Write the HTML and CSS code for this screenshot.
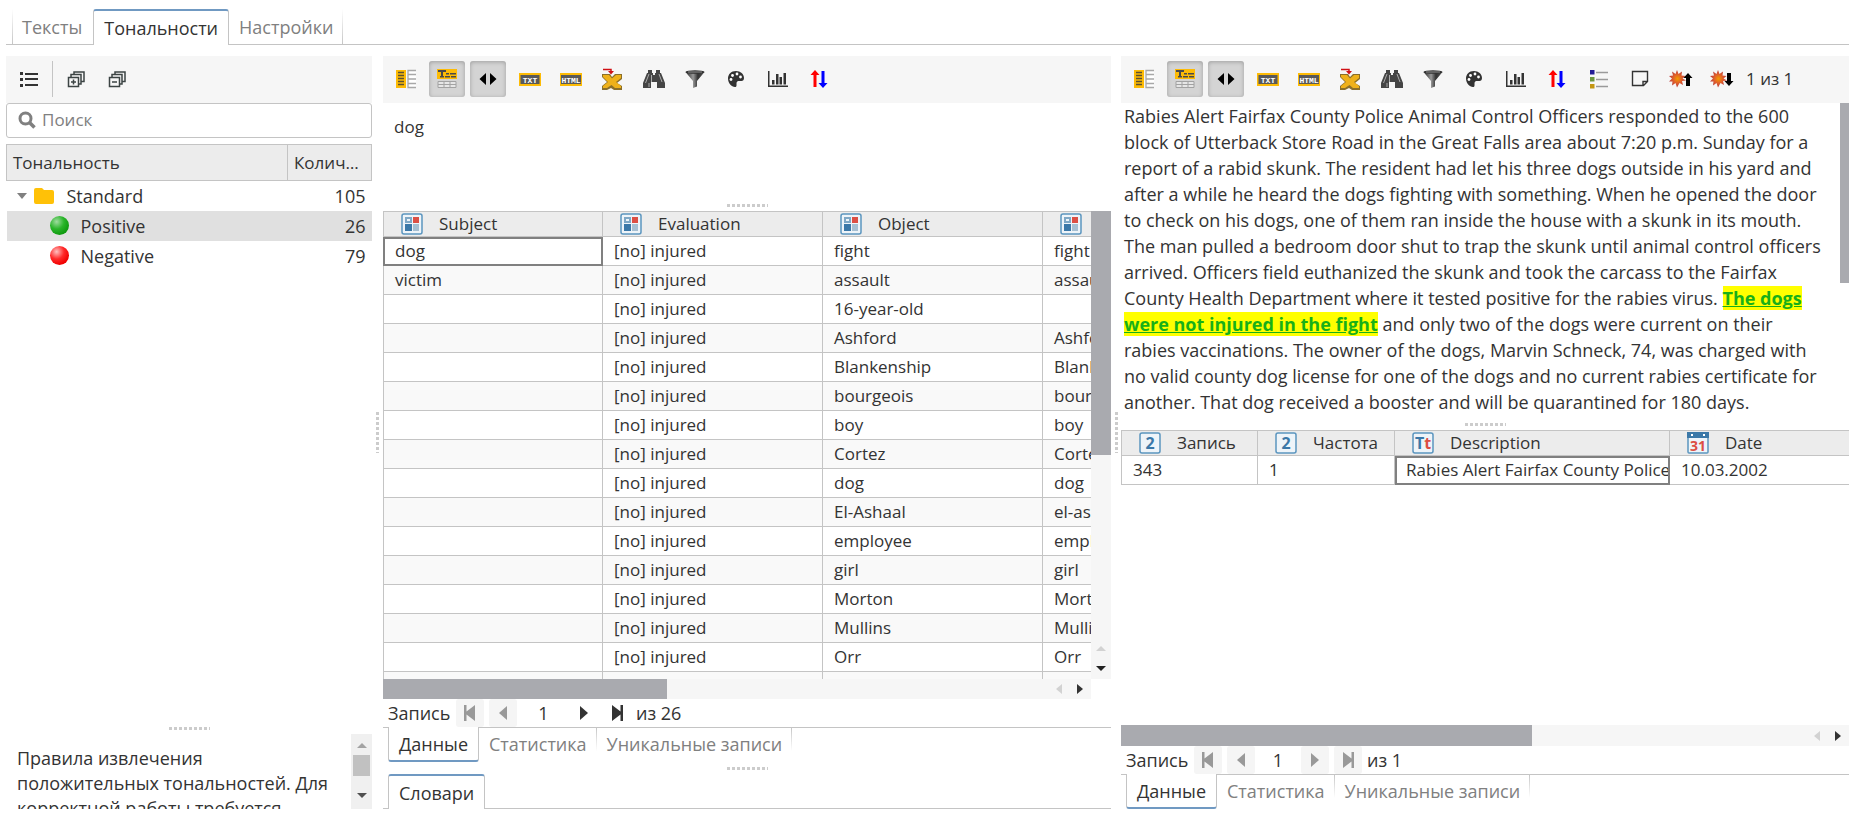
FILE: index.html
```html
<!DOCTYPE html>
<html lang="ru">
<head>
<meta charset="utf-8">
<title>Тональности</title>
<link rel="stylesheet" href="styles.css">
</head>
<body>
<svg class="gradients" aria-hidden="true">
  <defs>
    <radialGradient id="g-green" cx="35%" cy="30%" r="70%"><stop offset="0" stop-color="#9fdc9f"/><stop offset=".55" stop-color="#2bb52b"/><stop offset="1" stop-color="#0f9a0f"/></radialGradient>
    <radialGradient id="g-red" cx="35%" cy="30%" r="70%"><stop offset="0" stop-color="#ffc0c0"/><stop offset=".55" stop-color="#ff2a2a"/><stop offset="1" stop-color="#f00000"/></radialGradient>
    <linearGradient id="g-funnel"><stop offset="0" stop-color="#222"/><stop offset=".4" stop-color="#999"/><stop offset=".65" stop-color="#333"/><stop offset="1" stop-color="#555"/></linearGradient>
    <radialGradient id="g-star"><stop offset="0" stop-color="#f29a00"/><stop offset=".5" stop-color="#e0602a"/><stop offset="1" stop-color="#b83a3a"/></radialGradient>
  </defs>
</svg>
<svg class="sprite" aria-hidden="true">
  <symbol id="i-list" viewBox="0 0 20 20"><path fill="#333" d="M1 3h3v3H1zM1 9h3v3H1zM1 15h3v3H1zM6 4h13v2H6zM6 9h13v2H6zM6 15h13v2H6z"/></symbol>
  <symbol id="i-plus" viewBox="0 0 20 20"><path fill="none" stroke="#3c4444" stroke-width="1.500" d="M2.500 8.500h10v9h-10zM5 8V5.500h10V15h-2M8 5V3h10v9.500h-3M5 13h5M7.500 10.500v5"/></symbol>
  <symbol id="i-minus" viewBox="0 0 20 20"><path fill="none" stroke="#3c4444" stroke-width="1.500" d="M2.500 8.500h10v9h-10zM5 8V5.500h10V15h-2M8 5V3h10v9.500h-3M5 13h5"/></symbol>
  <symbol id="i-search" viewBox="0 0 18 18"><circle cx="7.500" cy="7.500" r="5.500" fill="none" stroke="#808080" stroke-width="3"/><path stroke="#808080" stroke-width="3.500" d="M11.500 11.500l5 5"/></symbol>
  <symbol id="i-cols" viewBox="0 0 20 20"><path fill="#fdbb05" d="M0 1h10v18H0z"/><path stroke="#5c5130" stroke-width="1.300" d="M2 3.500h6M2 6.500h6M2 9.500h6M2 12.500h6M2 15.500h6"/><path fill="#fff" stroke="#a8a8a8" stroke-width="1.300" d="M20 1.500h-8v17h8M12 5.500h8M12 10h8M12 14.500h8"/></symbol>
  <symbol id="i-rows" viewBox="0 0 20 20"><path fill="#fdbb05" d="M0 0h20v10H0z"/><path fill="#4a4a4a" d="M1 1h8v2H6v4H4V3H1zM9 4h3v1.500H9zM13 4h6v1.500h-6zM3 7h4v1.500H3zM8 7h5v1.500H8zM14 7h5v1.500h-5z"/><path fill="#e6e6e6" stroke="#a2a2a2" d="M1 12.500h18v6H1zM1 15.500h18M7 12.500v6M13 12.500v6"/></symbol>
  <symbol id="i-split" viewBox="0 0 20 20"><path d="M8 4v12L1.500 10zM12 4v12l6.500-6z"/></symbol>
  <symbol id="i-txt" viewBox="0 0 22 20"><path fill="#fdbb05" d="M0 4h22v13H0z"/><path fill="#595959" d="M1.500 6h19v9h-19z"/><text x="11" y="13.500" text-anchor="middle" class="px-label" fill="#fff">TXT</text></symbol>
  <symbol id="i-html" viewBox="0 0 22 20"><path fill="#fdbb05" d="M0 4h22v13H0z"/><path fill="#595959" d="M1 6h20v9H1z"/><text x="11" y="13.500" text-anchor="middle" class="px-label" fill="#fff">HTML</text></symbol>
  <symbol id="i-excel" viewBox="0 0 22 22"><path fill="#8a6f2a" d="M1 6h8l2 3 3-3h7v5l-5 4 5 3v4h-8l-3-2-4 2H1v-4l5-4-5-5z"/><path fill="#eeb11a" d="M2 7h6l3 3.500L15 7h5v3l-5 4 5 4v2h-6l-3.500-3L6 20H2v-2l5-4-5-5z"/><path fill="none" stroke="#d01015" stroke-width="1.500" d="M2 1.500h8V4"/><path fill="#d01015" d="M7 3h6l-3 3.500z"/></symbol>
  <symbol id="i-binoc" viewBox="0 0 22 20"><path fill="#454545" d="M5 1h4v3H5zM13 1h4v3h-4zM4 4h6v2h2V4h6l4 10v5h-8v-6h-6v6H0v-5z"/><path stroke="#aaa" stroke-width="1" d="M6 5L2.500 14M8.500 6v7M6 14v4M16 5l3 8"/></symbol>
  <symbol id="i-funnel" viewBox="0 0 20 20"><path fill="url(#g-funnel)" d="M.5 3L8 12v7l4-1.500V12l7.500-9z"/><ellipse cx="10" cy="3" rx="9.500" ry="1.800" fill="#333"/><path stroke="#aaa" d="M3 3h14" stroke-width=".8"/></symbol>
  <symbol id="i-palette" viewBox="0 0 18 18"><path fill="#333" d="M9 1c-5 0-8 3.500-8 7.500C1 13 4.500 17 8 17c2 0 1.500-2 1.500-3.500 0-2 1-2.500 3-2.500h2c1.500 0 2.500-1.200 2.500-3C17 4 13.500 1 9 1z"/><g fill="#fff"><circle cx="4" cy="9.500" r="1.400"/><circle cx="5.500" cy="5.500" r="1.400"/><circle cx="10" cy="4" r="1.400"/><circle cx="13.500" cy="7" r="1.400"/></g></symbol>
  <symbol id="i-chart" viewBox="0 0 22 20"><path fill="#333" d="M1 2h1.500v14.500H21V18H1zM5 11h2.500v4.500H5zM9 5h2.500v10.500H9zM12.500 8H15v7.500h-2.500zM16.500 4H19v11.500h-2.500z"/></symbol>
  <symbol id="i-updown" viewBox="0 0 18 20"><path fill="red" d="M5 1l4.500 5H6.500v12h-3V6H.5z"/><path fill="#00f" d="M13 19l-4.500-5h3V2h3v12h3z"/></symbol>
  <symbol id="i-legend" viewBox="0 0 20 20"><path stroke="#9a9a9a" stroke-width="1.500" d="M7 3.500h12M7 10.500h12M7 17.500h12"/><path fill="#221b96" d="M1 1h4.500v4.500H1z"/><path fill="#6b9640" d="M1 8h4.500v4.500H1z"/><path fill="#c39612" d="M1 15h4.500v4.500H1z"/></symbol>
  <symbol id="i-note" viewBox="0 0 20 20"><path fill="none" stroke="#333" stroke-width="1.400" d="M2.500 2.500h15v10l-4 4h-11zM17 12.500h-4V16.500"/></symbol>
  <symbol id="i-starup" viewBox="0 0 24 20"><path fill="url(#g-star)" d="M8 1l1.500 4L13 2.500l-.5 4 4 .5-3 2.500 3.500 2-4 .5 1 4-3.500-2L8 18.500 6.500 14 3 16.500l.5-4H0l3-3L0 7l4-.5-1-4L6.500 5z"/><path d="M19 4l4.500 5H21v8h-4V9h-2.500z"/></symbol>
  <symbol id="i-stardown" viewBox="0 0 24 20"><path fill="url(#g-star)" d="M8 1l1.500 4L13 2.500l-.5 4 4 .5-3 2.500 3.500 2-4 .5 1 4-3.500-2L8 18.500 6.500 14 3 16.500l.5-4H0l3-3L0 7l4-.5-1-4L6.500 5z"/><path d="M19 17l4.500-5H21V4h-4v8h-2.500z"/></symbol>
  <symbol id="i-cat" viewBox="0 0 22 22"><rect x="1" y="1" width="20" height="20" rx="2" fill="#eef4f9" stroke="#5b95bf" stroke-width="1.500"/><path fill="#7fa8c6" d="M4 4h7v6H4z"/><path fill="#eef4f9" d="M6 6h3v2H6z"/><path fill="#dc4f44" d="M12 4h6v6h-6z"/><path fill="#3b78a8" d="M4 11h7v7H4z"/><path fill="#a6bfd2" d="M12 11h6v7h-6z"/></symbol>
  <symbol id="i-num" viewBox="0 0 22 22"><rect x="1" y="1" width="20" height="20" rx="2" fill="#eef4f9" stroke="#5b95bf" stroke-width="1.500"/><text x="11" y="17" text-anchor="middle" class="type-label" fill="#3b78a8">2</text></symbol>
  <symbol id="i-text" viewBox="0 0 22 22"><rect x="1" y="1" width="20" height="20" rx="2" fill="#eef4f9" stroke="#5b95bf" stroke-width="1.500"/><text x="3" y="17" class="type-label" fill="#3b78a8">T<tspan fill="#dc4f44">t</tspan></text></symbol>
  <symbol id="i-date" viewBox="0 0 22 22"><rect x="1" y="1" width="20" height="20" rx="1" fill="#eef4f9" stroke="#5b95bf" stroke-width="1.500"/><path fill="#3b78a8" d="M0 0h22v6H0z"/><path fill="#fff" d="M4 2h2v2H4zM16 2h2v2h-2z"/><text x="11" y="19" text-anchor="middle" class="date-label" fill="#dc4f44">31</text></symbol>
  <symbol id="i-folder" viewBox="0 0 20 16"><path fill="#ffc107" d="M2 0h6l2 2h8a2 2 0 0 1 2 2v10a2 2 0 0 1-2 2H2a2 2 0 0 1-2-2V2a2 2 0 0 1 2-2z"/></symbol>
  <symbol id="i-first" viewBox="0 0 12 16"><path d="M0 0h2.500v6.500L11 0v16L2.500 9.500V16H0z"/></symbol>
  <symbol id="i-prev" viewBox="0 0 12 16"><path d="M10 1v14L2 8z"/></symbol>
  <symbol id="i-next" viewBox="0 0 12 16"><path d="M2 1v14l8-7z"/></symbol>
  <symbol id="i-last" viewBox="0 0 12 16"><path d="M12 0H9.500v6.500L1 0v16l8.500-6.500V16H12z"/></symbol>
</svg>

<nav class="tabs tabs-top tabs-main" role="tablist">
  <button class="tab" role="tab">Тексты</button>
  <button class="tab active" role="tab" aria-selected="true">Тональности</button>
  <button class="tab" role="tab">Настройки</button>
</nav>

<main class="layout">
  <section class="pane">
    <div class="toolbar toolbar-tree">
      <button class="tool" aria-label="Список"><svg class="ic20"><use href="#i-list"/></svg></button>
      <span class="divider"></span>
      <button class="tool" aria-label="Развернуть"><svg class="ic20"><use href="#i-plus"/></svg></button>
      <button class="tool" aria-label="Свернуть"><svg class="ic20"><use href="#i-minus"/></svg></button>
    </div>
    <label class="search"><svg class="ic18"><use href="#i-search"/></svg><input type="text" placeholder="Поиск" aria-label="Поиск"></label>
    <table class="tree">
      <colgroup><col><col class="c-count"></colgroup>
      <thead><tr><th>Тональность</th><th>Колич…</th></tr></thead>
      <tbody>
        <tr><td><span class="node"><span class="caret"></span><svg class="folder"><use href="#i-folder"/></svg>Standard</span></td><td>105</td></tr>
        <tr class="selected"><td><span class="node leaf"><svg class="ball" viewBox="0 0 18 18"><circle cx="9" cy="9" r="9" fill="url(#g-green)"/></svg>Positive</span></td><td>26</td></tr>
        <tr><td><span class="node leaf"><svg class="ball" viewBox="0 0 18 18"><circle cx="9" cy="9" r="9" fill="url(#g-red)"/></svg>Negative</span></td><td>79</td></tr>
      </tbody>
    </table>
    <div class="filler"></div>
    <div class="splitter-h"><span class="dots"></span></div>
    <div class="note">
      <p>Правила извлечения положительных тональностей. Для корректной работы требуется</p>
      <div class="note-scroll"><span class="tri up"></span><span class="note-thumb"></span><span class="tri down"></span></div>
    </div>
  </section>

  <div class="splitter-v"><span class="dots-v"></span></div>

  <section class="pane">
    <div class="toolbar">
      <div class="group">
        <button class="tool" aria-label="Столбцы"><svg class="ic20"><use href="#i-cols"/></svg></button>
        <button class="tool pressed" aria-label="Строки"><svg class="ic20"><use href="#i-rows"/></svg></button>
        <button class="tool pressed" aria-label="Ширина"><svg class="ic20"><use href="#i-split"/></svg></button>
      </div>
      <div class="group">
        <button class="tool" aria-label="Экспорт TXT"><svg class="ic22"><use href="#i-txt"/></svg></button>
        <button class="tool" aria-label="Экспорт HTML"><svg class="ic22"><use href="#i-html"/></svg></button>
        <button class="tool" aria-label="Экспорт Excel"><svg class="ic22"><use href="#i-excel"/></svg></button>
      </div>
      <div class="group">
        <button class="tool" aria-label="Найти"><svg class="ic22"><use href="#i-binoc"/></svg></button>
        <button class="tool" aria-label="Фильтр"><svg class="ic20"><use href="#i-funnel"/></svg></button>
        <button class="tool" aria-label="Цвета"><svg class="ic18"><use href="#i-palette"/></svg></button>
      </div>
      <div class="group">
        <button class="tool" aria-label="График"><svg class="ic22"><use href="#i-chart"/></svg></button>
        <button class="tool" aria-label="Сортировка"><svg class="ic20"><use href="#i-updown"/></svg></button>
      </div>
    </div>
    <div class="value">dog</div>
    <div class="splitter-h"><span class="dots"></span></div>
    <div class="grid-row">
      <div class="grid-view">
        <table class="grid grid-main">
          <thead><tr>
            <th><span class="head"><svg class="ic22"><use href="#i-cat"/></svg>Subject</span></th>
            <th><span class="head"><svg class="ic22"><use href="#i-cat"/></svg>Evaluation</span></th>
            <th><span class="head"><svg class="ic22"><use href="#i-cat"/></svg>Object</span></th>
            <th><span class="head"><svg class="ic22"><use href="#i-cat"/></svg></span></th>
          </tr></thead>
          <tbody>
            <tr><td class="focus">dog</td><td>[no] injured</td><td>fight</td><td>fight</td></tr>
            <tr><td>victim</td><td>[no] injured</td><td>assault</td><td>assault</td></tr>
            <tr><td></td><td>[no] injured</td><td>16-year-old</td><td></td></tr>
            <tr><td></td><td>[no] injured</td><td>Ashford</td><td>Ashford</td></tr>
            <tr><td></td><td>[no] injured</td><td>Blankenship</td><td>Blankenship</td></tr>
            <tr><td></td><td>[no] injured</td><td>bourgeois</td><td>bourgeois</td></tr>
            <tr><td></td><td>[no] injured</td><td>boy</td><td>boy</td></tr>
            <tr><td></td><td>[no] injured</td><td>Cortez</td><td>Cortez</td></tr>
            <tr><td></td><td>[no] injured</td><td>dog</td><td>dog</td></tr>
            <tr><td></td><td>[no] injured</td><td>El-Ashaal</td><td>el-ashaal</td></tr>
            <tr><td></td><td>[no] injured</td><td>employee</td><td>employee</td></tr>
            <tr><td></td><td>[no] injured</td><td>girl</td><td>girl</td></tr>
            <tr><td></td><td>[no] injured</td><td>Morton</td><td>Morton</td></tr>
            <tr><td></td><td>[no] injured</td><td>Mullins</td><td>Mullins</td></tr>
            <tr><td></td><td>[no] injured</td><td>Orr</td><td>Orr</td></tr>
            <tr><td></td><td>[no] injured</td><td></td><td></td></tr>
          </tbody>
        </table>
      </div>
      <div class="vscroll"><span class="vthumb"></span><span class="tri up off"></span><span class="tri down dark"></span></div>
    </div>
    <div class="hscroll hscroll-main"><span class="hthumb"></span><span class="tri left off"></span><span class="tri right"></span></div>
    <div class="pager pager-wide">
      <label for="rec1">Запись</label>
      <button disabled aria-label="Первая"><svg><use href="#i-first"/></svg></button>
      <button disabled aria-label="Предыдущая"><svg><use href="#i-prev"/></svg></button>
      <input id="rec1" type="text" value="1">
      <button aria-label="Следующая"><svg><use href="#i-next"/></svg></button>
      <button aria-label="Последняя"><svg><use href="#i-last"/></svg></button>
      <span class="total">из 26</span>
    </div>
    <div class="tabs tabs-bottom" role="tablist">
      <button class="tab active" role="tab" aria-selected="true">Данные</button>
      <button class="tab" role="tab">Статистика</button>
      <button class="tab" role="tab">Уникальные записи</button>
    </div>
    <div class="splitter-h splitter-low"><span class="dots"></span></div>
    <div class="tabs tabs-top" role="tablist"><button class="tab active" role="tab" aria-selected="true">Словари</button></div>
  </section>

  <div class="splitter-v"><span class="dots-v"></span></div>

  <section class="pane">
    <div class="toolbar">
      <div class="group">
        <button class="tool" aria-label="Столбцы"><svg class="ic20"><use href="#i-cols"/></svg></button>
        <button class="tool pressed" aria-label="Строки"><svg class="ic20"><use href="#i-rows"/></svg></button>
        <button class="tool pressed" aria-label="Ширина"><svg class="ic20"><use href="#i-split"/></svg></button>
      </div>
      <div class="group">
        <button class="tool" aria-label="Экспорт TXT"><svg class="ic22"><use href="#i-txt"/></svg></button>
        <button class="tool" aria-label="Экспорт HTML"><svg class="ic22"><use href="#i-html"/></svg></button>
        <button class="tool" aria-label="Экспорт Excel"><svg class="ic22"><use href="#i-excel"/></svg></button>
      </div>
      <div class="group">
        <button class="tool" aria-label="Найти"><svg class="ic22"><use href="#i-binoc"/></svg></button>
        <button class="tool" aria-label="Фильтр"><svg class="ic20"><use href="#i-funnel"/></svg></button>
        <button class="tool" aria-label="Цвета"><svg class="ic18"><use href="#i-palette"/></svg></button>
      </div>
      <div class="group">
        <button class="tool" aria-label="График"><svg class="ic22"><use href="#i-chart"/></svg></button>
        <button class="tool" aria-label="Сортировка"><svg class="ic20"><use href="#i-updown"/></svg></button>
      </div>
      <div class="group">
        <button class="tool" aria-label="Легенда"><svg class="ic20"><use href="#i-legend"/></svg></button>
        <button class="tool" aria-label="Заметка"><svg class="ic20"><use href="#i-note"/></svg></button>
        <button class="tool" aria-label="Предыдущее вхождение"><svg class="ic24"><use href="#i-starup"/></svg></button>
        <button class="tool" aria-label="Следующее вхождение"><svg class="ic24"><use href="#i-stardown"/></svg></button>
      </div>
      <span class="hits">1 из 1</span>
    </div>
    <div class="article">
      <p>Rabies Alert Fairfax County Police Animal Control Officers responded to the 600 block of Utterback Store Road in the Great Falls area about 7:20 p.m. Sunday for a report of a rabid skunk. The resident had let his three dogs outside in his yard and after a while he heard the dogs fighting with something. When he opened the door to check on his dogs, one of them ran inside the house with a skunk in its mouth. The man pulled a bedroom door shut to trap the skunk until animal control officers arrived. Officers field euthanized the skunk and took the carcass to the Fairfax County Health Department where it tested positive for the rabies virus. <mark>The dogs were not injured in the fight</mark> and only two of the dogs were current on their rabies vaccinations. The owner of the dogs, Marvin Schneck, 74, was charged with no valid county dog license for one of the dogs and no current rabies certificate for another. That dog received a booster and will be quarantined for 180 days.</p>
      <div class="article-scroll"><span></span></div>
    </div>
    <div class="splitter-h"><span class="dots"></span></div>
    <div class="grid-row">
      <div class="grid-view">
        <table class="grid grid-docs">
          <colgroup><col class="c-num"><col class="c-num"><col class="c-text"><col class="c-text"></colgroup>
          <thead><tr>
            <th><span class="head"><svg class="ic22"><use href="#i-num"/></svg>Запись</span></th>
            <th><span class="head"><svg class="ic22"><use href="#i-num"/></svg>Частота</span></th>
            <th><span class="head"><svg class="ic22"><use href="#i-text"/></svg>Description</span></th>
            <th><span class="head"><svg class="ic22"><use href="#i-date"/></svg>Date</span></th>
          </tr></thead>
          <tbody><tr><td>343</td><td>1</td><td class="focus">Rabies Alert Fairfax County Police Animal</td><td>10.03.2002</td></tr></tbody>
        </table>
      </div>
    </div>
    <div class="hscroll hscroll-docs"><span class="hthumb"></span><span class="tri left off"></span><span class="tri right"></span></div>
    <div class="pager">
      <label for="rec2">Запись</label>
      <button disabled aria-label="Первая"><svg><use href="#i-first"/></svg></button>
      <button disabled aria-label="Предыдущая"><svg><use href="#i-prev"/></svg></button>
      <input id="rec2" type="text" value="1">
      <button disabled aria-label="Следующая"><svg><use href="#i-next"/></svg></button>
      <button disabled aria-label="Последняя"><svg><use href="#i-last"/></svg></button>
      <span class="total">из 1</span>
    </div>
    <div class="tabs tabs-bottom" role="tablist">
      <button class="tab active" role="tab" aria-selected="true">Данные</button>
      <button class="tab" role="tab">Статистика</button>
      <button class="tab" role="tab">Уникальные записи</button>
    </div>
  </section>
</main>
</body>
</html>
```
FILE: styles.css
```css
* { box-sizing: border-box; }
html, body { height: 100%; }
body {
  margin: 0;
  padding: 9px 12px 4px 6px;
  display: flex;
  flex-direction: column;
  overflow: hidden;
  background: #fff;
  color: #333;
  font: 17px/24px "Open Sans", "Noto Sans", sans-serif;
}
button, input { font: inherit; color: inherit; border: 0; padding: 0; background: none; }
p { margin: 0; }
.gradients { position: absolute; width: 0; height: 0; }
.sprite { display: none; }
.px-label { font: bold 8px "Liberation Mono", monospace; }
.type-label { font: bold 16px "Open Sans", sans-serif; }
.date-label { font: bold 14px "Open Sans", sans-serif; }
.ic18 { width: 18px; height: 18px; }
.ic20 { width: 20px; height: 20px; }
.ic22 { width: 22px; height: 22px; }
.ic24 { width: 24px; height: 20px; }

/* tabs */
.tabs { display: flex; flex: none; height: 35px; padding-left: 5px; font-size: 18px; }
.tab { padding: 0 10px; color: #808080; white-space: nowrap; border: 0 solid #c4c4c4; }
.tab.active { color: #333; border-width: 0 1px; background: #fff; }
.tabs-top { box-shadow: inset 0 -1px #c4c4c4; }
.tabs-top .tab.active { border-top: 2px solid #7099c2; border-radius: 3px 3px 0 0; }
.tabs-bottom { box-shadow: inset 0 1px #c4c4c4; }
.tabs-bottom .tab { padding-bottom: 2px; }
.tabs-bottom .tab.active { padding-bottom: 0; border-bottom: 2px solid #7099c2; border-radius: 0 0 3px 3px; }
.tabs-main { height: 36px; padding-left: 6px; }
.tabs-main .tab:first-child { padding-right: 11px; }
.tab:not(.active) {
  background: linear-gradient(#fff, #c4c4c4) right / 1px 100% no-repeat;
}
.tabs-main .tab:first-child {
  background: linear-gradient(#fff, #c4c4c4) left / 1px 100% no-repeat;
}
.tabs-bottom .tab:not(.active) {
  background: linear-gradient(#c4c4c4, #fff) right top / 1px 24px no-repeat;
}

/* panes */
.layout {
  flex: 1;
  min-height: 0;
  margin-top: 11px;
  display: grid;
  grid-template-columns: 366px 11px minmax(0, 1fr) 10px minmax(0, 1fr);
  grid-template-rows: minmax(0, 1fr);
}
.pane { display: flex; flex-direction: column; min-width: 0; min-height: 0; }
.filler { flex: 1; }
.splitter-h { flex: none; height: 11px; display: flex; align-items: center; justify-content: center; }
.splitter-low { height: 12px; }
.splitter-v { display: flex; align-items: center; justify-content: center; }
.dots { width: 41px; height: 3px; background: repeating-linear-gradient(90deg, #ccc 0 3px, #fff 3px 5px); }
.dots-v { width: 3px; height: 41px; background: repeating-linear-gradient(#ccc 0 3px, #fff 3px 5px); }

/* toolbar */
.toolbar { flex: none; height: 47px; padding: 0 5px 1px; display: flex; align-items: center; gap: 6px; background: #f6f6f6; }
.toolbar-tree { gap: 5px; }
.group { display: flex; gap: 5px; }
.tool { width: 36px; height: 36px; display: flex; align-items: center; justify-content: center; border-radius: 3px; }
.pressed { background: #d4d4d4; box-shadow: inset 0 1px 4px rgba(0, 0, 0, .25); }
.divider { width: 1px; height: 36px; background: #c4c4c4; }

/* left pane */
.search { flex: none; height: 35px; display: flex; align-items: center; gap: 6px; padding: 0 11px 1px; border: 1px solid #c4c4c4; border-radius: 3px; }
.search input { flex: 1; min-width: 0; outline: 0; }
.search input::placeholder { color: #808080; opacity: 1; }
.tree { flex: none; width: 100%; margin-top: 6px; table-layout: fixed; border-collapse: collapse; }
.c-count { width: 84px; }
.tree th { height: 36px; padding: 0 6px; text-align: left; font-weight: 400; background: #ececec; border: 1px solid #c4c4c4; white-space: nowrap; }
.tree td { height: 30px; padding: 0; font-size: 18px; }
.tree td:last-child { padding-right: 6px; text-align: right; }
.tree .selected { background: #e0e0e0; }
.node { display: flex; align-items: center; padding-left: 10px; }
.leaf { padding-left: 43px; }
.caret { border: 5px solid transparent; border-top: 6px solid #808080; border-bottom: 0; margin-right: 7px; }
.folder { width: 20px; height: 16px; margin-right: 13px; }
.ball { width: 19px; height: 19px; margin-right: 12px; }
.note { flex: none; height: 75px; display: flex; font-size: 18px; }
.note p { flex: 1; padding: 12px 10px 0 11px; line-height: 25px; overflow: hidden; }
.note-scroll { width: 21px; background: #f0f0f0; display: flex; flex-direction: column; align-items: center; gap: 7px; padding-top: 9px; }
.note-thumb { width: 17px; height: 21px; background: #c1c1c1; }
.note-scroll .down { margin-top: 10px; }

/* triangles */
.tri { width: 0; height: 0; border: 5px solid transparent; flex: none; }
.tri.up { border-top: 0; border-bottom-color: #a3a3a3; }
.tri.down { border-bottom: 0; border-top-color: #505050; }
.tri.dark { border-top-color: #222; }
.tri.left { border-left: 0; border-right: 6px solid #333; }
.tri.right { border-right: 0; border-left: 6px solid #333; }
.tri.up.off { border-bottom-color: #d2d2d2; }
.tri.left.off { border-right-color: #d2d2d2; }

/* data grids */
.value { flex: none; height: 97px; padding: 12px 11px; }
.grid-row { flex: 1; min-height: 0; display: flex; }
.grid-view { flex: 1; min-width: 0; overflow: hidden; }
.grid { table-layout: fixed; border-collapse: separate; border-spacing: 0; }
.grid-main { width: 880px; }
.grid-docs { width: 824px; }
.c-num { width: 137px; }
.c-text { width: 275px; }
.grid th { height: 26px; padding: 0; font-weight: 400; background: #ececec; border: 1px solid #c4c4c4; border-left: 0; }
.grid td { height: 29px; padding: 0 0 0 11px; border: 1px solid #c4c4c4; border-width: 0 1px 1px 0; white-space: nowrap; overflow: hidden; }
.grid th:first-child, .grid td:first-child { border-left: 1px solid #c4c4c4; }
.grid tr:nth-child(even) td { background: #f9f9f9; }
.grid .focus { outline: 2px solid #808080; outline-offset: -2px; }
.head { display: flex; align-items: center; gap: 16px; padding-left: 17px; }
.vscroll { width: 20px; background: #f6f6f6; display: flex; flex-direction: column; align-items: center; padding-bottom: 8px; }
.vthumb { width: 20px; flex: 0 0 53%; margin-bottom: auto; background: #a9aaaf; }
.vscroll .down { margin-top: 15px; }
.hscroll { flex: none; height: 20px; display: flex; align-items: center; gap: 15px; padding-right: 8px; background: #f6f6f6; }
.hthumb { align-self: stretch; margin-right: auto; background: #a9aaaf; }
.hscroll-main { margin-right: 20px; }
.hscroll-main .hthumb { width: 284px; }
.hscroll-docs { height: 21px; }
.hscroll-docs .hthumb { width: 411px; }

/* record navigation */
.pager { flex: none; height: 28px; display: flex; align-items: center; gap: 5px; padding-left: 5px; font-size: 18px; }
.pager button { width: 28px; height: 28px; display: flex; align-items: center; justify-content: center; border-radius: 3px; }
.pager button:disabled { background: #f5f5f5; }
.pager svg { width: 12px; height: 16px; fill: #333; }
.pager button:disabled svg { fill: #999; }
.pager input { width: 36px; text-align: center; }
.pager-wide input { width: 43px; }
.pager label { width: 63px; }

/* document text */
.article { flex: none; height: 316px; display: flex; overflow: hidden; font-size: 18px; }
.article p { flex: 1; padding: 0 12px 0 3px; line-height: 26px; }
.article mark { background: #ff0; color: #18b018; font-weight: 700; text-decoration: underline; }
.article-scroll { width: 9px; }
.article-scroll span { display: block; height: 180px; background: #a9aaaf; }
```
